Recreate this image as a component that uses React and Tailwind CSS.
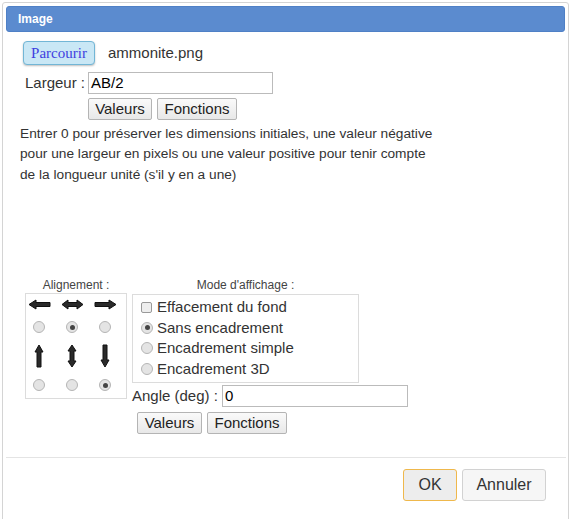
import React from 'react'

const font = { fontFamily: '"Liberation Sans", Arial, sans-serif' }

const Radio = ({ checked }) => (
  <span className="inline-flex h-[12px] w-[12px] items-center justify-center rounded-full border border-[#b5b5b5] bg-[#e4e4e4]">
    {checked && <span className="h-[5px] w-[5px] rounded-full bg-[#444]" />}
  </span>
)

const Arrow = ({ dir }) => {
  const shapes = {
    left: { w: 23, h: 11, d: 'M1 5.5 L8 1 L8 3.5 L22 3.5 L22 7.5 L8 7.5 L8 10 Z' },
    right: { w: 23, h: 11, d: 'M22 5.5 L15 1 L15 3.5 L1 3.5 L1 7.5 L15 7.5 L15 10 Z' },
    both: { w: 23, h: 11, d: 'M1 5.5 L7 1 L7 3.5 L16 3.5 L16 1 L22 5.5 L16 10 L16 7.5 L7 7.5 L7 10 Z' },
    up: { w: 10, h: 24, d: 'M5 1 L9 8 L7 8 L7 23 L3 23 L3 8 L1 8 Z' },
    down: { w: 10, h: 24, d: 'M5 23 L9 16 L7 16 L7 1 L3 1 L3 16 L1 16 Z' },
    vboth: { w: 10, h: 24, d: 'M5 1 L9 7 L7 7 L7 17 L9 17 L5 23 L1 17 L3 17 L3 7 L1 7 Z' },
  }
  const s = shapes[dir]
  return (
    <svg width={s.w} height={s.h} viewBox={`0 0 ${s.w} ${s.h}`}>
      <path d={s.d} fill="#2a2a2a" stroke="#111" strokeWidth="1" strokeLinejoin="round" />
    </svg>
  )
}

const Btn = ({ children, w }) => (
  <button
    type="button"
    className={`h-[22px] ${w} rounded-[2px] border border-[#b4b4b4] bg-gradient-to-b from-[#fafafa] to-[#e8e8e8] text-[15px] leading-none text-[#222]`}
  >
    {children}
  </button>
)

export default function App() {
  return (
    <div className="h-[519px] w-[572px] overflow-hidden bg-white pl-[2px] pt-[2px] text-[#333]" style={font}>
      <div className="h-[530px] w-[567px] rounded-[3px] border border-[#d4d4d4] p-[3px]">
        <div className="flex h-[26px] items-center rounded-[3px] border border-[#4f80c6] bg-[#5b8bcf] pl-[11px] text-[12px] font-bold text-white">
          Image
        </div>

        <div className="flex flex-col">
          <div className="mt-[9px] flex items-center pl-[17px]">
            <button
              type="button"
              className="h-[24px] w-[72px] rounded-[4px] border border-[#72b6d6] bg-[#c9e7f5] text-[15px] leading-none text-[#3f3fe0] shadow-[0_1px_2px_rgba(0,0,0,0.25)]"
              style={{ fontFamily: '"Liberation Serif", "Times New Roman", serif' }}
            >
              Parcourir
            </button>
            <span className="ml-[13px] text-[15px]">ammonite.png</span>
          </div>

          <div className="mt-[7px] flex items-center pl-[19px]">
            <span className="w-[63px] text-[15px]">Largeur :</span>
            <div className="flex h-[22px] w-[185px] items-center border border-[#bbb] px-[2px] text-[15px] text-black">
              AB/2
            </div>
          </div>

          <div className="mt-[3px] flex gap-[5px] pl-[82px]">
            <Btn w="w-[64px]">Valeurs</Btn>
            <Btn w="w-[80px]">Fonctions</Btn>
          </div>

          <p className="mt-[4px] w-[432px] pl-[14px] text-[13.7px] leading-[20.5px]">
            Entrer 0 pour préserver les dimensions initiales, une valeur négative pour une largeur en pixels ou une valeur positive pour tenir compte de la longueur unité (s'il y en a une)
          </p>

          <div className="mt-[93px] flex pl-[19px]">
            <div className="flex w-[102px] flex-col items-center">
              <span className="text-[12px] leading-[14px] text-[#444]">Alignement :</span>
              <div className="mt-[1px] grid h-[106px] w-[102px] grid-cols-[repeat(3,22px)] grid-rows-[20px_26px_32px_26px] justify-items-center gap-x-[11px] border border-[#dcdcdc] pl-[2px]">
                <div className="flex items-center"><Arrow dir="left" /></div>
                <div className="flex items-center"><Arrow dir="both" /></div>
                <div className="flex items-center"><Arrow dir="right" /></div>
                <div className="flex items-center"><Radio /></div>
                <div className="flex items-center"><Radio checked /></div>
                <div className="flex items-center"><Radio /></div>
                <div className="flex items-center"><Arrow dir="up" /></div>
                <div className="flex items-center"><Arrow dir="vboth" /></div>
                <div className="flex items-center"><Arrow dir="down" /></div>
                <div className="flex items-center"><Radio /></div>
                <div className="flex items-center"><Radio /></div>
                <div className="flex items-center"><Radio checked /></div>
              </div>
            </div>

            <div className="ml-[5px] flex flex-col">
              <div className="w-[227px] text-center text-[12px] leading-[14px] text-[#444]">Mode d'affichage :</div>
              <div className="mt-[2px] flex h-[89px] w-[227px] flex-col border border-[#dcdcdc] pl-[8px] pt-[2px] text-[15px] leading-[20.5px]">
                <div className="flex items-center gap-[5px]">
                  <span className="h-[11px] w-[11px] rounded-[2px] border border-[#999] bg-[#eee]" />
                  Effacement du fond
                </div>
                <div className="flex items-center gap-[4px]"><Radio checked />Sans encadrement</div>
                <div className="flex items-center gap-[4px]"><Radio />Encadrement simple</div>
                <div className="flex items-center gap-[4px]"><Radio />Encadrement 3D</div>
              </div>
              <div className="mt-[2px] flex items-center">
                <span className="w-[90px] text-[15px]">Angle (deg) :</span>
                <div className="flex h-[22px] w-[186px] items-center border border-[#bbb] px-[2px] text-[15px] text-black">0</div>
              </div>
              <div className="mt-[4px] flex gap-[5px] pl-[5px]">
                <Btn w="w-[65px]">Valeurs</Btn>
                <Btn w="w-[80px]">Fonctions</Btn>
              </div>
            </div>
          </div>

          <div className="mt-[23px] h-px w-[560px] bg-[#e4e4e4]" />

          <div className="mt-[11px] flex justify-end gap-[5px] pr-[19px]">
            <button
              type="button"
              className="h-[32px] w-[54px] rounded-[3px] border border-[#efb84c] bg-[#ededed] text-[16px] text-[#333]"
            >
              OK
            </button>
            <button
              type="button"
              className="h-[32px] w-[84px] rounded-[3px] border border-[#d2d2d2] bg-[#f6f6f6] text-[16px] text-[#333]"
            >
              Annuler
            </button>
          </div>
        </div>
      </div>
    </div>
  )
}
